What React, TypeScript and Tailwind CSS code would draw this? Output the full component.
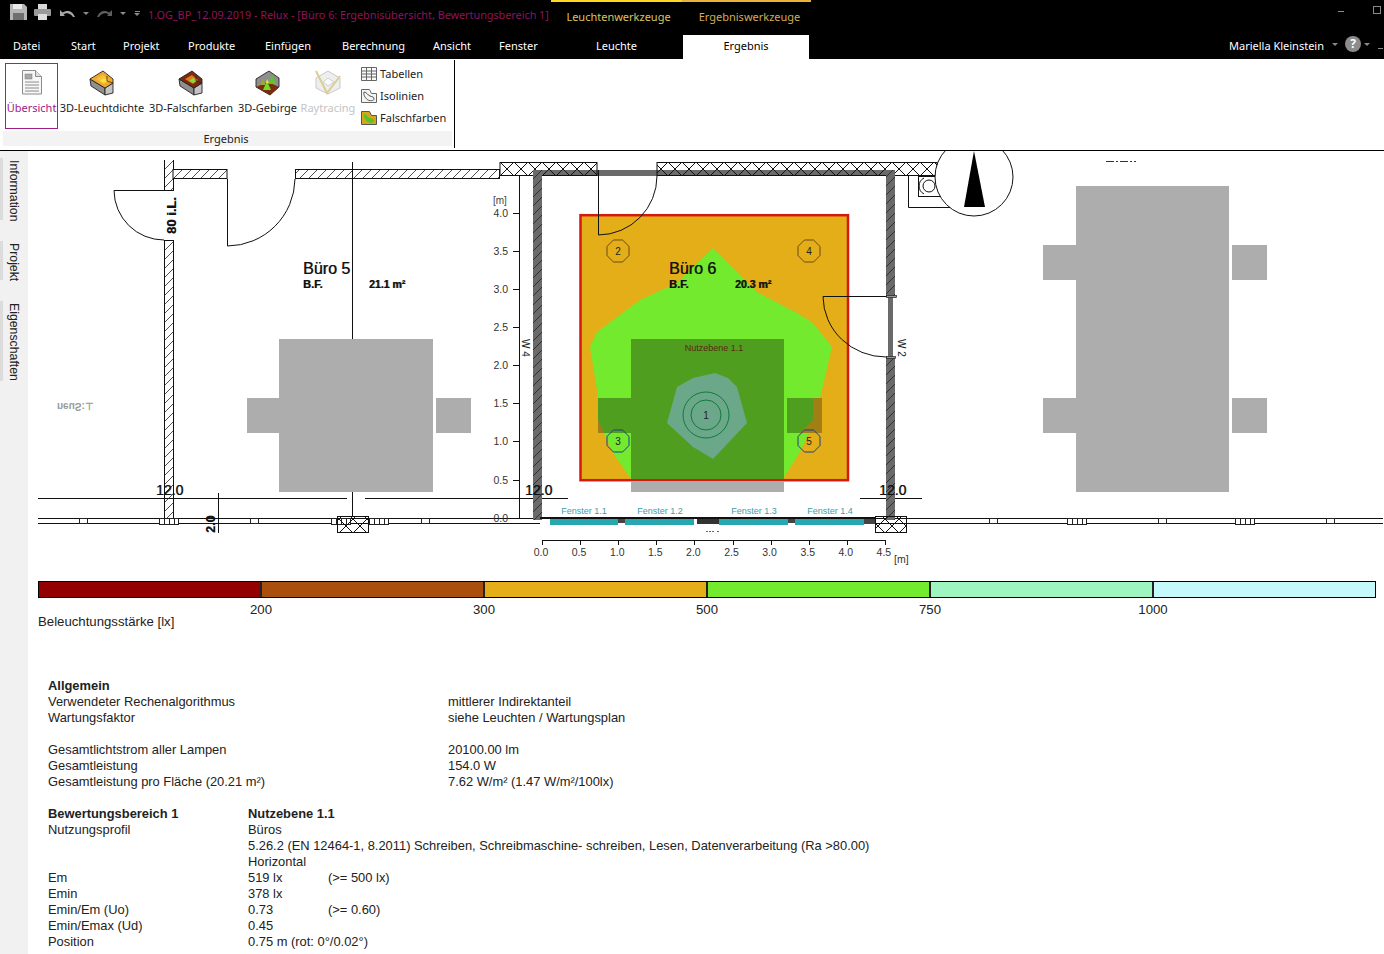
const UI = "font-['Noto_Sans','Open_Sans',sans-serif]";

const tabs = [
  { label: "Datei", w: "w-[58px]" },
  { label: "Start", w: "w-[52px]" },
  { label: "Projekt", w: "w-[65px]" },
  { label: "Produkte", w: "w-[77px]" },
  { label: "Einfügen", w: "w-[77px]" },
  { label: "Berechnung", w: "w-[91px]" },
  { label: "Ansicht", w: "w-[66px]" },
  { label: "Fenster", w: "w-[97px]" },
  { label: "Leuchte", w: "w-[87px]" },
];

function Caret() {
  return <span className="w-0 h-0 border-x-[3px] border-x-transparent border-t-[3px] border-t-[#8a8a8a]" />;
}

function TitleBar() {
  return (
    <div className="h-[35px] bg-black flex">
      <div className="w-[551px] flex items-center pl-[10px] pb-[5px]">
        <svg width="17" height="16" viewBox="0 0 17 16" className="shrink-0 mb-[6px]">
          <path d="M0 0h14l3 3v13H0z" fill="#b5b5b5" />
          <rect x="3" y="0" width="9" height="5" fill="#e8e8e8" />
          <rect x="3" y="9" width="11" height="7" fill="#6e6e6e" />
        </svg>
        <svg width="17" height="16" viewBox="0 0 17 16" className="shrink-0 ml-[7px] mb-[6px]">
          <rect x="4" y="0" width="9" height="5" fill="#d8d8d8" />
          <rect x="0" y="5" width="17" height="7" rx="1" fill="#9a9a9a" />
          <rect x="4" y="10" width="9" height="6" fill="#dedede" />
        </svg>
        <svg width="15" height="9" viewBox="0 0 15 9" className="shrink-0 ml-[9px] mb-[4px]">
          <path d="M0 1v6h5L3.500 5.500C6 3.500 10 3.500 13 8h2C12.500 1.500 7 .5 2.500 3.500z" fill="#a8a8a8" />
        </svg>
        <span className="ml-[8px] mb-[4px] flex"><Caret /></span>
        <svg width="15" height="9" viewBox="0 0 15 9" className="shrink-0 ml-[8px] mb-[4px]">
          <path d="M15 1v6h-5l1.500-1.500C9 3.500 5 3.500 2 8H0C2.500 1.500 8 .5 12.500 3.500z" fill="#5e5e5e" />
        </svg>
        <span className="ml-[8px] mb-[4px] flex"><Caret /></span>
        <span className="ml-[8px] mb-[4px] flex flex-col items-center gap-[1px]">
          <span className="w-[5px] h-[1px] bg-[#8a8a8a]" />
          <Caret />
        </span>
        <span className="ml-[8px] text-[10.800px] text-[#8f1458] whitespace-nowrap">
          1.OG_BP_12.09.2019 - Relux - [Büro 6: Ergebnisübersicht, Bewertungsbereich 1]
        </span>
      </div>
      <div className="w-[131px] border-t-2 border-[#ffd91f] flex justify-center pt-[7px] pl-[4px] text-[11px] text-[#dcc45e]">
        Leuchtenwerkzeuge
      </div>
      <div className="w-[129px] border-t-2 border-[#e9b23a] flex justify-center pt-[7px] pl-[6px] text-[11px] text-[#d6aa55]">
        Ergebniswerkzeuge
      </div>
      <div className="flex-1 flex items-start justify-end pr-[3px] pt-[6px]">
        <span className="w-[6px] h-[1px] bg-[#8a8a8a] mt-[5px] mr-[29px]" />
        <span className="w-[8px] h-[8px] border border-[#8a8a8a]" />
      </div>
    </div>
  );
}

function TabBar() {
  return (
    <div className="h-[24px] bg-black flex items-center pl-[13px] pb-[1px] text-[11px] text-white">
      {tabs.map((t) => (
        <div key={t.label} className={t.w}>{t.label}</div>
      ))}
      <div className="w-[126px] h-[24px] mb-[-1px] bg-white text-black flex items-center justify-center pb-[1px]">Ergebnis</div>
      <div className="flex-1 flex items-center justify-end pr-[1px]">
        <span>Mariella Kleinstein</span>
        <span className="ml-[8px] mb-[4px] flex"><Caret /></span>
        <span className="ml-[7px] w-[16px] h-[16px] mb-[5px] rounded-full bg-[#8c8c8c] flex items-center justify-center text-[12px] font-bold leading-none">?</span>
        <span className="ml-[3px] mb-[4px] flex"><Caret /></span>
        <span className="ml-[8px] w-[5px] h-[1px] bg-[#8a8a8a] mt-[3px]" />
      </div>
    </div>
  );
}

function DocIcon() {
  return (
    <svg width="22" height="25" viewBox="0 0 22 25">
      <path d="M1.500 .5h13l6 6v17.500h-19z" fill="#f7f7f7" stroke="#8c8c8c" />
      <path d="M14.500 .5v6h6" fill="#e0e0e0" stroke="#8c8c8c" />
      <rect x="4" y="4" width="7" height="5" fill="#a8a8a8" stroke="#777" strokeWidth=".5" />
      <path d="M4 12h14M4 15h14M4 18h14M4 21h14" stroke="#8c8c8c" />
    </svg>
  );
}

function BoxIcon({ top, mid, inner }: { top: string; mid: string; inner: string }) {
  return (
    <svg width="26" height="26" viewBox="0 0 26 26">
      <path d="M1 9l15 9v7L2 16z" fill="#8f8f8f" stroke="#222" strokeWidth=".9" />
      <path d="M16 18l8-5v10l-8 2z" fill="#c4c4c4" stroke="#222" strokeWidth=".9" />
      <path d="M1 9l13-8 10 8v4l-8 5z" fill={top} stroke="#222" strokeWidth=".9" />
      <path d="M7 9l7-4 6 5-5 4z" fill={mid} />
      <path d="M11 11l4-3 3 2v1l-3 2z" fill={inner} />
      <path d="M18 6v5l6 2" fill="none" stroke="#222" strokeWidth=".7" />
    </svg>
  );
}

function MountainIcon() {
  return (
    <svg width="26" height="26" viewBox="0 0 26 26">
      <path d="M1 9L14 1l10 7v9L15 25 1 17z" fill="#8e8e8e" stroke="#222" strokeWidth=".9" />
      <path d="M1 17l14 8 9-8-11-5z" fill="#7a2c0c" />
      <path d="M8 20l4-9 4 9z" fill="#6fdc2a" />
      <path d="M13 14l4-9 4 9z" fill="#5fc725" />
      <path d="M5 15l3-6 3 6z" fill="#9aa83a" />
      <path d="M11 13l1-4 2 4z" fill="#f6e24e" />
    </svg>
  );
}

function RayIcon() {
  return (
    <svg width="26" height="25" viewBox="0 0 26 25">
      <path d="M1 8L13 1l12 7v10l-12 6-12-6z" fill="#eeeeee" stroke="#c9c9c9" />
      <path d="M1 1l11 22L25 6" fill="none" stroke="#d9cf96" strokeWidth="2" />
      <path d="M13 8l6 4-6 4-5-4z" fill="#f9f9f9" stroke="#cfcfcf" />
    </svg>
  );
}

function RibbonButton({ label, w, children, active, muted }: { label: string; w: string; children: React.ReactNode; active?: boolean; muted?: boolean }) {
  return (
    <div className={`${w} h-[66px] flex flex-col items-center ${active ? "border border-[#a0208a]" : ""}`}>
      <div className={`h-[25px] ${active ? "mt-[6px]" : "mt-[7px]"}`}>{children}</div>
      <span className={`mt-[5px] text-[11px] whitespace-nowrap ${active ? "text-[#a0208a]" : muted ? "text-[#c4c4c4]" : "text-[#222]"}`}>
        {label}
      </span>
    </div>
  );
}

function Ribbon() {
  return (
    <div className="h-[92px] bg-white border-b border-black">
      <div className="w-[455px] h-[88px] mt-[1px] border-r border-black pl-[3px] flex flex-col">
        <div className="h-[71px] flex pt-[3px] pl-[2px]">
          <RibbonButton label="Übersicht" w="w-[53px]" active><DocIcon /></RibbonButton>
          <div className="w-[2px]" />
          <RibbonButton label="3D-Leuchtdichte" w="w-[84px]"><BoxIcon top="#f0a92e" mid="#f5c33a" inner="#f6e23a" /></RibbonButton>
          <div className="w-[5px]" />
          <RibbonButton label="3D-Falschfarben" w="w-[84px]"><BoxIcon top="#7a2a10" mid="#e07a1a" inner="#7fe03a" /></RibbonButton>
          <div className="w-[5px]" />
          <RibbonButton label="3D-Gebirge" w="w-[59px]"><MountainIcon /></RibbonButton>
          <div className="w-[4px]" />
          <RibbonButton label="Raytracing" w="w-[54px]" muted><RayIcon /></RibbonButton>
          <div className="ml-[6px] pt-[3px] flex flex-col gap-[6px] text-[11px] text-[#222]">
            <div className="h-[16px] flex items-center gap-[3px]">
              <svg width="16" height="14" viewBox="0 0 16 14">
                <path d="M.5.5h15v13H.5zM.5 4h15M.5 7h15M.5 10h15M5.500.5v13M10.500.5v13" fill="#fafafa" stroke="#666" />
              </svg>
              Tabellen
            </div>
            <div className="h-[16px] flex items-center gap-[3px]">
              <svg width="16" height="14" viewBox="0 0 16 14">
                <path d="M.5.5h8l2 4h5v9H.5z" fill="#f4f4f4" stroke="#666" />
                <path d="M3 3c3 0 3 3 6 4s4 1 4 3-4 2-6 1-5-5-4-8z" fill="none" stroke="#555" />
              </svg>
              Isolinien
            </div>
            <div className="h-[16px] flex items-center gap-[3px]">
              <svg width="16" height="14" viewBox="0 0 16 14">
                <path d="M.5.5h8l2 4h5v9H.5z" fill="#d7a61d" stroke="#555" />
                <path d="M3 3c3 0 3 3 6 4s4 1 4 3-4 2-6 1-5-5-4-8z" fill="#52c52a" />
              </svg>
              Falschfarben
            </div>
          </div>
        </div>
        <div className="w-[449px] h-[15px] pr-[3px] bg-[#f3f3f3] text-[11px] leading-[15px] text-center text-[#222]">Ergebnis</div>
      </div>
    </div>
  );
}

function SideRail() {
  const items = [
    { label: "Information", h: "h-[62px]" },
    { label: "Projekt", h: "h-[39px]" },
    { label: "Eigenschaften", h: "h-[80px]" },
  ];
  return (
    <div className="w-[28px] shrink-0 bg-[#f1f1f1] pt-[7px] flex flex-col gap-[21px]">
      {items.map((i) => (
        <div key={i.label} className={`${i.h} border-l-[3px] border-[#dcdcdc] pl-[3px] pt-[2px]`}>
          <span className="[writing-mode:vertical-rl] text-[12.300px] leading-[16px] text-[#222] font-['Liberation_Sans',sans-serif] whitespace-nowrap">
            {i.label}
          </span>
        </div>
      ))}
    </div>
  );
}

function Cad({ x, y, size, children, bold, anchor }: { x: number; y: number; size: number; children: string; bold?: boolean; anchor?: "middle" }) {
  return (
    <g fontSize={size} fontWeight={bold ? 700 : 400} textAnchor={anchor} fill="#111">
      <text x={x} y={y}>{children}</text>
      <text x={x + 0.6} y={y} opacity=".7">{children}</text>
    </g>
  );
}

function Octagon({ cx, cy, stroke, n }: { cx: number; cy: number; stroke: string; n: string }) {
  const r = 11;
  const k = r * 0.414;
  const pts = [
    [-k, -r], [k, -r], [r, -k], [r, k], [k, r], [-k, r], [-r, k], [-r, -k],
  ].map(([a, b]) => `${cx + a},${cy + b}`).join(" ");
  return (
    <g>
      <polygon points={pts} fill="none" stroke={stroke} strokeWidth="1" />
      <text x={cx} y={cy + 3.500} fontSize="10" textAnchor="middle" fill="#222">{n}</text>
    </g>
  );
}

function FloorPlan() {
  const yTicks = [
    ["4.0", 213], ["3.5", 251], ["3.0", 289], ["2.5", 327], ["2.0", 365], ["1.5", 403], ["1.0", 441], ["0.5", 480], ["0.0", 518],
  ] as const;
  const xTicks = ["0.0", "0.5", "1.0", "1.5", "2.0", "2.5", "3.0", "3.5", "4.0", "4.5"];
  const mullions = [79, 250, 421, 989, 1158, 1326];
  const clusters = [159, 331, 369, 1067, 1235];
  const gray = "#adadad";
  const panes = [
    [550, 618, 584, "Fenster 1.1"], [625, 694, 660, "Fenster 1.2"], [719, 788, 754, "Fenster 1.3"], [795, 864, 830, "Fenster 1.4"],
  ] as const;
  return (
    <svg width="1356" height="424" viewBox="28 151 1356 424" className="block font-['Liberation_Sans',sans-serif]">
      <defs>
        <pattern id="hatch" width="9" height="9" patternUnits="userSpaceOnUse" patternTransform="translate(0 1)">
          <path d="M-1 10L10 -1" stroke="#222" strokeWidth=".8" />
        </pattern>
        <pattern id="cross" width="14" height="14" patternUnits="userSpaceOnUse" patternTransform="translate(500 162)">
          <path d="M0 0L14 14M14 0L0 14" stroke="#111" strokeWidth="1" />
        </pattern>
      </defs>

      {/* left room */}
      <rect x="164.500" y="240.500" width="9" height="279" fill="url(#hatch)" stroke="#111" />
      <rect x="164.500" y="160" width="9" height="30" fill="url(#hatch)" stroke="none" />
      <path d="M164.500 160v30M173.500 169V160M173.500 179v11" stroke="#111" fill="none" />
      <rect x="173" y="169.500" width="54" height="9" fill="url(#hatch)" stroke="#111" />
      <rect x="295.500" y="169.500" width="204" height="9" fill="url(#hatch)" stroke="#111" />
      <path d="M114 190.500H174M114 190.500A50 50 0 0 0 164 240M164 240.500h10" fill="none" stroke="#111" />
      <path d="M227.500 179V246M295 179A68 68 0 0 1 227.500 246M352.500 162V339" fill="none" stroke="#111" />
      <g transform="translate(176 234) rotate(-90)">
        <Cad x={0} y={0} size={13} bold>80 i.L.</Cad>
      </g>
      <Cad x={303} y={274} size={16}>Büro 5</Cad>
      <Cad x={303} y={288} size={11} bold>B.F.</Cad>
      <Cad x={369} y={288} size={10.500} bold>21.1 m²</Cad>
      <rect x="279" y="339" width="154" height="153" fill={gray} />
      <rect x="247" y="398" width="32" height="35" fill={gray} />
      <rect x="436" y="398" width="35" height="35" fill={gray} />
      <text x="57" y="-403" transform="scale(1 -1)" fontSize="10" fontWeight="700" fill="#9a9a9a">neuS:⊥</text>

      {/* dimension and outer wall lines */}
      <path d="M38 498.500H347M365 498.500H568M860 498.500H922M218.500 493V533" stroke="#111" fill="none" />
      <path d="M38 518.500H540M38 523.500H540M876 518.500H1383M876 523.500H1383" stroke="#111" fill="none" />
      {mullions.map((x) => (
        <rect key={x} x={x + 0.5} y="518.500" width="8" height="5" fill="white" stroke="#222" />
      ))}
      {clusters.map((a) => (
        <g key={a}>
          <rect x={a + 0.5} y="518.500" width="19" height="6" fill="white" stroke="#222" />
          <path d={`M${a + 5.5} 518V525M${a + 10.5} 518V525M${a + 15.5} 518V525`} stroke="#222" />
        </g>
      ))}
      <rect x="337.500" y="516.500" width="31" height="16" fill="url(#cross)" stroke="#111" />
      <path d="M352.500 492V516" stroke="#111" />
      <g transform="translate(215 533) rotate(-90)">
        <Cad x={0} y={0} size={12.500} bold>2.0</Cad>
      </g>

      {/* room 6 walls */}
      <rect x="534" y="170" width="358" height="6" fill="#6a6a6a" />
      <rect x="500" y="162.500" width="97" height="13" fill="url(#cross)" stroke="#111" />
      <rect x="657" y="162.500" width="280" height="13" fill="url(#cross)" stroke="#111" />
      <rect x="533" y="170" width="9" height="350" fill="#6a6a6a" />
      <rect x="533" y="170" width="9" height="350" fill="url(#hatch)" />
      <rect x="886" y="170" width="9" height="126" fill="#6a6a6a" />
      <rect x="886" y="170" width="9" height="126" fill="url(#hatch)" />
      <rect x="886" y="357" width="9" height="163" fill="#6a6a6a" />
      <rect x="886" y="357" width="9" height="163" fill="url(#hatch)" />
      <rect x="888" y="296" width="5" height="61" fill="#6a6a6a" />

      {/* false colours */}
      <rect x="580.500" y="215.200" width="267.500" height="265" fill="#e3ae17" stroke="#d4190f" strokeWidth="2.500" />
      <polygon
        points="713,248 757,292 797,313 813,323 832,347 820,398 813,425 800,452 783,479 631,479 613,453 600,425 597,390 590,347 597,332 640,300 677,283"
        fill="#74ea2f"
      />
      <rect x="631" y="339" width="153" height="140" fill="#4f9e20" />
      <rect x="631" y="481.500" width="153" height="10.500" fill={gray} />
      <rect x="598" y="398" width="33" height="35" fill="#4f9e20" />
      <rect x="787" y="398" width="35" height="35" fill="#4f9e20" />
      <polygon points="813,398 822,398 822,433 800,433 813,420" fill="#a17f14" />
      <polygon points="598,420 598,433 604,433" fill="#a17f14" />
      <polygon points="715,373 728,378 737,387 747,423 713,459 693,447 667,423 677,387 693,378" fill="#6ba88a" />
      <circle cx="706" cy="415" r="23" fill="none" stroke="#0f7a3a" />
      <circle cx="706" cy="415" r="15" fill="none" stroke="#0f7a3a" />
      <text x="706" y="419" fontSize="10" textAnchor="middle" fill="#222">1</text>
      <Octagon cx={618} cy={251} stroke="#6b4a1a" n="2" />
      <Octagon cx={809} cy={251} stroke="#6b4a1a" n="4" />
      <Octagon cx={618} cy={441} stroke="#1c3f88" n="3" />
      <Octagon cx={809} cy={441} stroke="#1c3f88" n="5" />
      <Cad x={669} y={274} size={16}>Büro 6</Cad>
      <Cad x={669} y={288} size={11} bold>B.F.</Cad>
      <Cad x={735} y={288} size={10.500} bold>20.3 m²</Cad>
      <text x="714" y="351" fontSize="9" textAnchor="middle" fill="#5a2a10">Nutzebene 1.1</text>
      <path d="M598.500 170V235M657 176A59 59 0 0 1 598.500 235M823 296.500H896M823 296.500A63 61 0 0 0 886 357" fill="none" stroke="#111" />
      <rect x="886.500" y="295.500" width="10" height="2" fill="#999" stroke="#222" strokeWidth=".7" />
      <rect x="886.500" y="356.500" width="9" height="2" fill="#999" stroke="#222" strokeWidth=".7" />
      <g fontSize="10" fill="#222">
        <text x="0" y="0" transform="translate(522 339) rotate(90)">W 4</text>
        <text x="0" y="0" transform="translate(898 339) rotate(90)">W 2</text>
      </g>

      {/* window wall */}
      <rect x="540" y="517" width="336" height="2" fill="#111" />
      <rect x="618" y="519" width="7" height="4" fill="#444" />
      <rect x="788" y="519" width="7" height="4" fill="#444" />
      <rect x="697" y="519" width="22" height="5" fill="#333" />
      <rect x="864" y="519" width="12" height="5" fill="#444" />
      {panes.map(([a, b, c, t]) => (
        <g key={t}>
          <rect x={a} y="519" width={b - a} height="6" fill="#27a8b0" />
          <text x={c} y="514" fontSize="9" textAnchor="middle" fill="#3a9fa8">{t}</text>
        </g>
      ))}
      <rect x="875.500" y="516.500" width="31" height="16" fill="url(#cross)" stroke="#111" />
      <Cad x={156} y={495} size={14}>12.0</Cad>
      <Cad x={525} y={495} size={14}>12.0</Cad>
      <Cad x={879} y={495} size={14}>12.0</Cad>
      <path d="M706 531.500h9M717 531.500h3" stroke="#666" strokeDasharray="2 1" />

      {/* scales */}
      <path d="M519.500 176V518" stroke="#111" fill="none" />
      <text x="493" y="204" fontSize="10" fill="#444">[m]</text>
      {yTicks.map(([t, y]) => (
        <g key={t}>
          <path d={`M513 ${y + 0.5}H519`} stroke="#111" />
          <text x="508" y={y + 4} fontSize="10.500" textAnchor="end" fill="#333">{t}</text>
        </g>
      ))}
      <path d="M542 540.500H885" stroke="#111" />
      {xTicks.map((t, i) => {
        const x = 542 + i * 38.1;
        return (
          <g key={t}>
            <path d={`M${Math.round(x) + 0.5} 540V545`} stroke="#111" />
            <text x={x - 1} y="556" fontSize="10.500" textAnchor="middle" fill="#333">{t}</text>
          </g>
        );
      })}
      <text x="894" y="563" fontSize="10.500" fill="#333">[m]</text>

      {/* compass and shaft */}
      <path d="M908.500 176V207.500H960" fill="none" stroke="#111" />
      <rect x="918.500" y="176.500" width="22" height="20" fill="white" stroke="#111" />
      <circle cx="929" cy="186" r="6" fill="none" stroke="#111" />
      <path d="M924 178a9 9 0 0 0 0 16" fill="none" stroke="#111" />
      <circle cx="974" cy="177" r="39" fill="white" stroke="#111" />
      <polygon points="974,151 985,207 964,207" fill="black" />

      {/* right room */}
      <rect x="1076" y="186" width="153" height="306" fill={gray} />
      <rect x="1043" y="245" width="33" height="35" fill={gray} />
      <rect x="1043" y="398" width="33" height="35" fill={gray} />
      <rect x="1232" y="245" width="35" height="35" fill={gray} />
      <rect x="1232" y="398" width="35" height="35" fill={gray} />
      <path d="M1106 161.500h30" stroke="#333" strokeDasharray="8 2 2 2" />
    </svg>
  );
}

function Legend() {
  const segments = ["bg-[#930000]", "bg-[#a94e0d]", "bg-[#e3ae17]", "bg-[#74ea2f]", "bg-[#9ff5bf]", "bg-[#c5f9fb]"];
  const labels = ["200", "300", "500", "750", "1000", ""];
  return (
    <div className="ml-[10px] mt-[6px] w-[1338px] font-['Liberation_Sans',sans-serif] text-[13.200px] text-[#222]">
      <div className="h-[17px] flex border border-black">
        {segments.map((s, i) => (
          <div key={s} className={`flex-1 ${s} ${i < 5 ? "border-r-2 border-[#222]" : ""}`} />
        ))}
      </div>
      <div className="flex mt-[6px] h-[12px] leading-[12px]">
        {labels.map((l, i) => (
          <div key={i} className="flex-1 flex justify-end">
            <span className="translate-x-1/2">{l}</span>
          </div>
        ))}
      </div>
      <div className="leading-[12px]">Beleuchtungsstärke [lx]</div>
    </div>
  );
}

const overview = [
  ["Verwendeter Rechenalgorithmus", "mittlerer Indirektanteil"],
  ["Wartungsfaktor", "siehe Leuchten / Wartungsplan"],
  ["", ""],
  ["Gesamtlichtstrom aller Lampen", "20100.00 lm"],
  ["Gesamtleistung", "154.0 W"],
  ["Gesamtleistung pro Fläche (20.21 m²)", "7.62 W/m² (1.47 W/m²/100lx)"],
  ["", ""],
];

const rating = [
  ["Nutzungsprofil", "Büros", ""],
  ["", "5.26.2 (EN 12464-1, 8.2011) Schreiben, Schreibmaschine- schreiben, Lesen, Datenverarbeitung (Ra >80.00)", ""],
  ["", "Horizontal", ""],
  ["Em", "519 lx", "(>= 500 lx)"],
  ["Emin", "378 lx", ""],
  ["Emin/Em (Uo)", "0.73", "(>= 0.60)"],
  ["Emin/Emax (Ud)", "0.45", ""],
  ["Position", "0.75 m (rot: 0°/0.02°)", ""],
];

function Report() {
  return (
    <div className="ml-[20px] mt-[50px] font-['Liberation_Sans',sans-serif] text-[12.900px] leading-[16px] text-[#222]">
      <div className="h-[16px] font-bold">Allgemein</div>
      {overview.map(([a, b], i) => (
        <div key={i} className="h-[16px] flex">
          <div className="w-[400px]">{a}</div>
          <div>{b}</div>
        </div>
      ))}
      <div className="h-[16px] flex font-bold">
        <div className="w-[200px]">Bewertungsbereich 1</div>
        <div>Nutzebene 1.1</div>
      </div>
      {rating.map(([a, b, c], i) => (
        <div key={i} className="h-[16px] flex whitespace-nowrap">
          <div className="w-[200px]">{a}</div>
          <div className={c ? "w-[80px]" : ""}>{b}</div>
          <div>{c}</div>
        </div>
      ))}
    </div>
  );
}

export default function App() {
  return (
    <div className={`w-[1384px] h-[954px] overflow-hidden bg-white flex flex-col ${UI}`}>
      <TitleBar />
      <TabBar />
      <Ribbon />
      <div className="flex-1 flex min-h-0">
        <SideRail />
        <div className="flex-1 min-w-0">
          <FloorPlan />
          <Legend />
          <Report />
        </div>
      </div>
    </div>
  );
}
